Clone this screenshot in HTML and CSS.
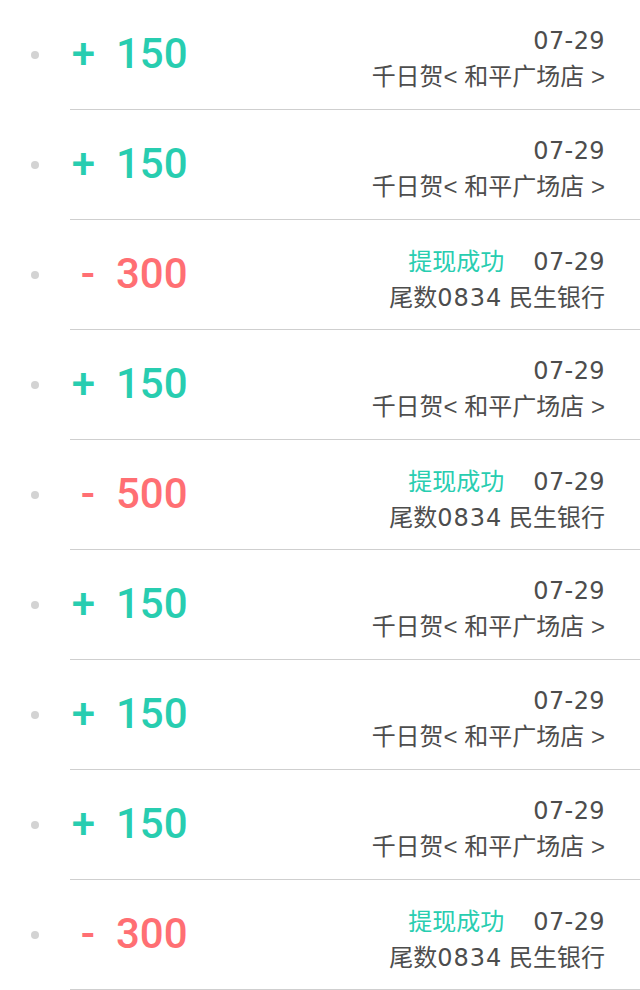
FILE: index.html
```html
<!DOCTYPE html>
<html lang="zh-CN">
<head>
<meta charset="utf-8">
<title>明细</title>
<link rel="stylesheet" href="styles.css">
</head>
<body>
<ul class="list">
  <li class="row">
    <div class="bullet"><span class="dot"></span></div>
    <div class="main">
      <div class="amount plus"><span class="sign">+</span><span class="num">150</span></div>
      <div class="info">
        <div class="line-top"><span class="date">07-29</span></div>
        <div class="line-sub">千日贺&lt; 和平广场店 &gt;</div>
      </div>
    </div>
  </li>
  <li class="row">
    <div class="bullet"><span class="dot"></span></div>
    <div class="main">
      <div class="amount plus"><span class="sign">+</span><span class="num">150</span></div>
      <div class="info">
        <div class="line-top"><span class="date">07-29</span></div>
        <div class="line-sub">千日贺&lt; 和平广场店 &gt;</div>
      </div>
    </div>
  </li>
  <li class="row">
    <div class="bullet"><span class="dot"></span></div>
    <div class="main">
      <div class="amount minus"><span class="sign">-</span><span class="num">300</span></div>
      <div class="info">
        <div class="line-top"><span class="status">提现成功</span><span class="date">07-29</span></div>
        <div class="line-sub">尾数<span class="digits">0834</span> 民生银行</div>
      </div>
    </div>
  </li>
  <li class="row">
    <div class="bullet"><span class="dot"></span></div>
    <div class="main">
      <div class="amount plus"><span class="sign">+</span><span class="num">150</span></div>
      <div class="info">
        <div class="line-top"><span class="date">07-29</span></div>
        <div class="line-sub">千日贺&lt; 和平广场店 &gt;</div>
      </div>
    </div>
  </li>
  <li class="row">
    <div class="bullet"><span class="dot"></span></div>
    <div class="main">
      <div class="amount minus"><span class="sign">-</span><span class="num">500</span></div>
      <div class="info">
        <div class="line-top"><span class="status">提现成功</span><span class="date">07-29</span></div>
        <div class="line-sub">尾数<span class="digits">0834</span> 民生银行</div>
      </div>
    </div>
  </li>
  <li class="row">
    <div class="bullet"><span class="dot"></span></div>
    <div class="main">
      <div class="amount plus"><span class="sign">+</span><span class="num">150</span></div>
      <div class="info">
        <div class="line-top"><span class="date">07-29</span></div>
        <div class="line-sub">千日贺&lt; 和平广场店 &gt;</div>
      </div>
    </div>
  </li>
  <li class="row">
    <div class="bullet"><span class="dot"></span></div>
    <div class="main">
      <div class="amount plus"><span class="sign">+</span><span class="num">150</span></div>
      <div class="info">
        <div class="line-top"><span class="date">07-29</span></div>
        <div class="line-sub">千日贺&lt; 和平广场店 &gt;</div>
      </div>
    </div>
  </li>
  <li class="row">
    <div class="bullet"><span class="dot"></span></div>
    <div class="main">
      <div class="amount plus"><span class="sign">+</span><span class="num">150</span></div>
      <div class="info">
        <div class="line-top"><span class="date">07-29</span></div>
        <div class="line-sub">千日贺&lt; 和平广场店 &gt;</div>
      </div>
    </div>
  </li>
  <li class="row">
    <div class="bullet"><span class="dot"></span></div>
    <div class="main">
      <div class="amount minus"><span class="sign">-</span><span class="num">300</span></div>
      <div class="info">
        <div class="line-top"><span class="status">提现成功</span><span class="date">07-29</span></div>
        <div class="line-sub">尾数<span class="digits">0834</span> 民生银行</div>
      </div>
    </div>
  </li>
</ul>
</body>
</html>
```

FILE: styles.css
```css
html, body {
  margin: 0;
  padding: 0;
  background: #ffffff;
}

body {
  font-family: "Liberation Sans", "Noto Sans CJK SC", sans-serif;
  color: #4d4d4d;
}

.list {
  list-style: none;
  margin: 0;
  padding: 0;
}

.row {
  display: flex;
  height: 110px;
}

.bullet {
  width: 70px;
  flex: none;
  display: flex;
  align-items: center;
  justify-content: center;
}

.dot {
  width: 8px;
  height: 8px;
  border-radius: 50%;
  background: #d3d3d3;
}

.main {
  flex: 1;
  display: flex;
  justify-content: space-between;
  align-items: flex-start;
  border-bottom: 1px solid #cfcfcf;
  padding-right: 35px;
}

.amount {
  display: flex;
  margin-top: 33px;
  font-family: Roboto, "Liberation Sans", sans-serif;
  font-weight: 500;
  font-size: 42px;
  line-height: 42px;
}

.amount.plus {
  color: #28cdb0;
}

.amount.minus {
  color: #ff6f73;
}

.sign {
  width: 25px;
  text-align: right;
}

.num {
  margin-left: 21px;
}

.info {
  margin-top: 24px;
  text-align: right;
  font-size: 24px;
  line-height: 35px;
}

.line-top {
  display: flex;
  justify-content: flex-end;
  align-items: baseline;
}

.date {
  font-family: "DejaVu Sans", "Liberation Sans", sans-serif;
  font-size: 24px;
  letter-spacing: 0.4px;
}

.status {
  color: #28cdb0;
  margin-right: 29px;
}

.line-sub {
  white-space: nowrap;
}

.digits {
  font-family: "DejaVu Sans", "Liberation Sans", sans-serif;
  letter-spacing: 1px;
}
```
